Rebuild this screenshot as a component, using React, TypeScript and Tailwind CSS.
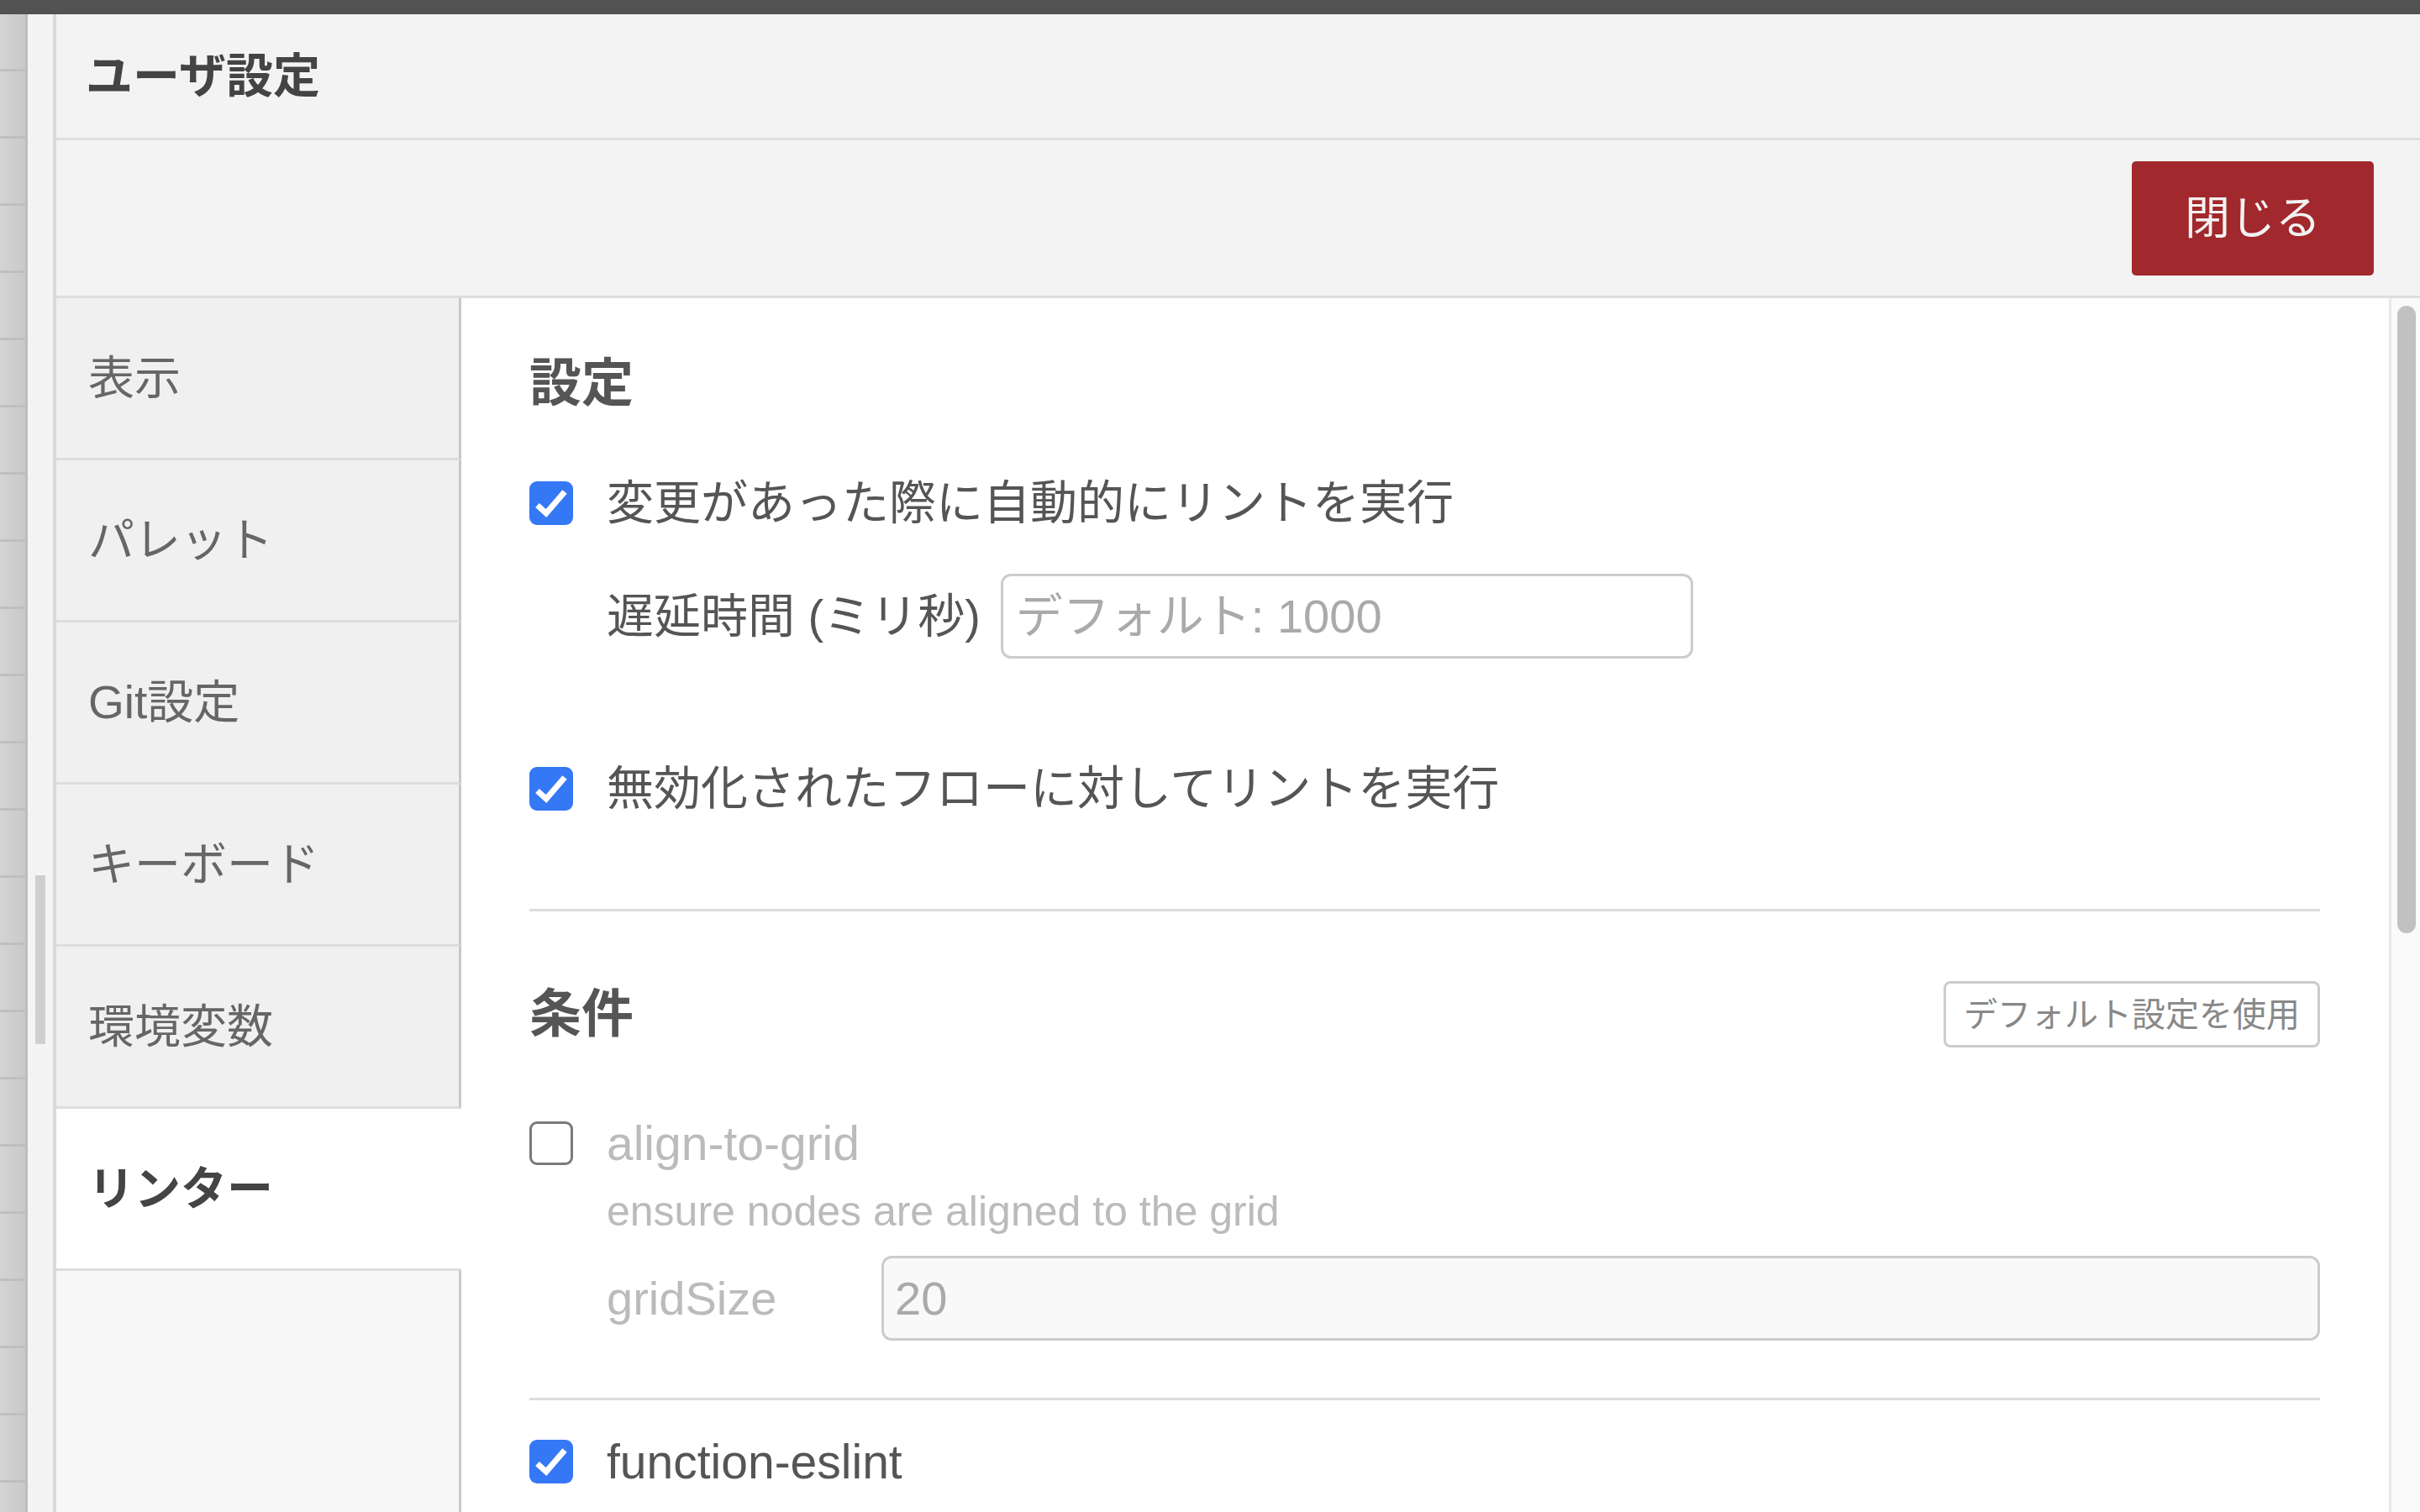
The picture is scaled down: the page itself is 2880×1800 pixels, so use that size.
import React from "react";

// Checkbox drawn like the macOS one in the screenshot
const Checkbox = ({ checked }: { checked: boolean }) =>
  checked ? (
    <div className="w-[52px] h-[52px] shrink-0 rounded-[9px] bg-[#3478f6]">
      <svg viewBox="0 0 52 52" className="w-[52px] h-[52px]" fill="none" stroke="white" strokeWidth={7} strokeLinejoin="miter">
        <path d="M9.5 28.5L20 38L42 12.5" />
      </svg>
    </div>
  ) : (
    <div className="w-[52px] h-[52px] shrink-0 rounded-[9px] border-[3px] border-[#7a7a7a] bg-white" />
  );

const tabs = ["表示", "パレット", "Git設定", "キーボード", "環境変数", "リンター"];
const active = "リンター";

const App = () => {
  return (
    <div className="w-[2880px] h-[1800px] overflow-hidden flex flex-col bg-[#f3f3f3] font-['Liberation_Sans','Noto_Sans_CJK_JP',sans-serif]">
      {/* Top bar */}
      <div className="h-[17px] shrink-0 bg-[#525252]" />

      <div className="flex flex-1 min-h-0">
        {/* Workspace behind the dialog */}
        <div className="w-[33px] shrink-0 bg-gradient-to-r from-[#d4d4d4] to-[#c9c9c9] border-r-[3px] border-[#bdbdbd] flex flex-col">
          <div className="h-[68px] shrink-0 border-b-[3px] border-[#bfbfbf]" />
          {Array.from({ length: 22 }).map((_, i) => (
            <div key={i} className="h-[80px] shrink-0 border-b-[3px] border-[#bfbfbf]" />
          ))}
        </div>
        <div className="w-[30px] shrink-0 bg-[#f4f4f4] flex flex-col">
          <div className="mt-[1025px] ml-[9px] w-[12px] h-[201px] bg-[#cfcfcf]" />
        </div>

        {/* Dialog */}
        <div className="flex-1 flex flex-col border-l-[4px] border-[#d9d9d9] bg-[#f3f3f3]">
          {/* Header */}
          <div className="h-[150px] shrink-0 border-b-[3px] border-[#dddddd] flex items-center pl-[35px]">
            <h1 className="text-[56px] font-bold text-[#444] leading-none">ユーザ設定</h1>
          </div>

          {/* Button bar */}
          <div className="h-[188px] shrink-0 border-b-[3px] border-[#dddddd] flex items-center justify-end pr-[55px]">
            <button className="w-[288px] h-[136px] rounded-[5px] bg-[#a1282c] text-[#f2f2f2] text-[54px] leading-none">
              閉じる
            </button>
          </div>

          {/* Body */}
          <div className="flex flex-1 min-h-0">
            {/* Sidebar */}
            <div className="w-[482px] shrink-0 flex flex-col">
              {tabs.map((t) => (
                <div
                  key={t}
                  className={
                    t === active
                      ? "h-[193px] shrink-0 flex items-center pl-[38px] bg-white border-b-[3px] border-[#dddddd] text-[55px] font-bold text-[#444]"
                      : "h-[193px] shrink-0 flex items-center pl-[38px] bg-[#f0f0f0] border-b-[3px] border-b-[#dddddd] border-r-[3px] border-r-[#c8c8c8] text-[55px] text-[#666]"
                  }
                >
                  {t}
                </div>
              ))}
              <div className="flex-1 bg-[#f7f7f7] border-r-[3px] border-[#c8c8c8]" />
            </div>

            {/* Content */}
            <div className="flex-1 bg-white pl-[81px] pr-[82px] flex flex-col text-[#555]">
              <div className="mt-[62px] h-[80px] flex items-center">
                <h3 className="text-[62px] font-semibold leading-none">設定</h3>
              </div>

              <div className="mt-[70px] h-[64px] flex items-center gap-[40px]">
                <Checkbox checked />
                <span className="text-[56px] leading-none">変更があった際に自動的にリントを実行</span>
              </div>

              <div className="mt-[52px] h-[101px] flex items-center pl-[92px]">
                <span className="text-[56px] leading-none">遅延時間 (ミリ秒)</span>
                <div className="ml-[24px] w-[824px] h-[101px] rounded-[12px] border-[3px] border-[#cccccc] bg-white flex items-center pl-[15px]">
                  <span className="text-[56px] leading-none text-[#aaaaaa]">デフォルト: 1000</span>
                </div>
              </div>

              <div className="mt-[123px] h-[64px] flex items-center gap-[40px]">
                <Checkbox checked />
                <span className="text-[56px] leading-none">無効化されたフローに対してリントを実行</span>
              </div>

              <div className="mt-[111px] h-[3px] bg-[#dddddd]" />

              <div className="mt-[83px] h-[79px] flex items-center justify-between">
                <h3 className="text-[62px] font-semibold leading-none">条件</h3>
                <button className="w-[448px] h-[79px] rounded-[8px] border-[3px] border-[#cccccc] bg-white text-[40px] leading-none text-[#888]">
                  デフォルト設定を使用
                </button>
              </div>

              <div className="mt-[82px] h-[64px] flex items-center gap-[40px]">
                <Checkbox checked={false} />
                <span className="text-[57px] leading-none text-[#bbbbbb]">align-to-grid</span>
              </div>

              <div className="mt-[21px] h-[56px] flex items-center pl-[92px]">
                <span className="text-[50px] leading-none text-[#bbbbbb]">ensure nodes are aligned to the grid</span>
              </div>

              <div className="mt-[25px] h-[101px] flex items-center pl-[92px]">
                <span className="w-[327px] shrink-0 text-[56px] leading-none text-[#bbbbbb]">gridSize</span>
                <div className="flex-1 h-[101px] rounded-[12px] border-[3px] border-[#cccccc] bg-[#f9f9f9] flex items-center pl-[13px]">
                  <span className="text-[56px] leading-none text-[#aaaaaa]">20</span>
                </div>
              </div>

              <div className="mt-[68px] h-[3px] bg-[#dddddd]" />

              <div className="mt-[41px] h-[64px] flex items-center gap-[40px]">
                <Checkbox checked />
                <span className="text-[57px] leading-none">function-eslint</span>
              </div>
            </div>

            {/* Scrollbar */}
            <div className="w-[37px] shrink-0 bg-[#fafafa] border-l-[3px] border-[#e8e8e8]">
              <div className="mt-[9px] ml-[7px] w-[22px] h-[747px] rounded-full bg-[#c1c1c1]" />
            </div>
          </div>
        </div>
      </div>
    </div>
  );
};

export default App;
